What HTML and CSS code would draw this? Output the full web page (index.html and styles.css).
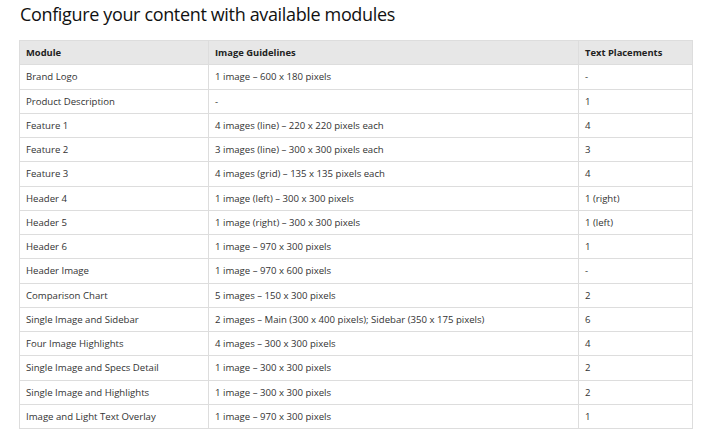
FILE: index.html
```html
<!DOCTYPE html>
<html lang="en">
<head>
<meta charset="utf-8">
<title>Modules</title>
<link rel="stylesheet" href="styles.css">
</head>
<body>
<main class="page">
  <h1 class="title">Configure your content with available modules</h1>
  <table class="modules">
    <colgroup>
      <col class="c1"><col class="c2"><col class="c3">
    </colgroup>
    <thead>
      <tr><th>Module</th><th>Image Guidelines</th><th>Text Placements</th></tr>
    </thead>
    <tbody>
      <tr><td>Brand Logo</td><td>1 image – 600 x 180 pixels</td><td>-</td></tr>
      <tr><td>Product Description</td><td>-</td><td>1</td></tr>
      <tr><td>Feature 1</td><td>4 images (line) – 220 x 220 pixels each</td><td>4</td></tr>
      <tr><td>Feature 2</td><td>3 images (line) – 300 x 300 pixels each</td><td>3</td></tr>
      <tr><td>Feature 3</td><td>4 images (grid) – 135 x 135 pixels each</td><td>4</td></tr>
      <tr><td>Header 4</td><td>1 image (left) – 300 x 300 pixels</td><td>1 (right)</td></tr>
      <tr><td>Header 5</td><td>1 image (right) – 300 x 300 pixels</td><td>1 (left)</td></tr>
      <tr><td>Header 6</td><td>1 image – 970 x 300 pixels</td><td>1</td></tr>
      <tr><td>Header Image</td><td>1 image – 970 x 600 pixels</td><td>-</td></tr>
      <tr><td>Comparison Chart</td><td>5 images – 150 x 300 pixels</td><td>2</td></tr>
      <tr><td>Single Image and Sidebar</td><td>2 images – Main (300 x 400 pixels); Sidebar (350 x 175 pixels)</td><td>6</td></tr>
      <tr><td>Four Image Highlights</td><td>4 images – 300 x 300 pixels</td><td>4</td></tr>
      <tr><td>Single Image and Specs Detail</td><td>1 image – 300 x 300 pixels</td><td>2</td></tr>
      <tr><td>Single Image and Highlights</td><td>1 image – 300 x 300 pixels</td><td>2</td></tr>
      <tr><td>Image and Light Text Overlay</td><td>1 image – 970 x 300 pixels</td><td>1</td></tr>
    </tbody>
  </table>
</main>
</body>
</html>
```
FILE: styles.css
```css
html, body {
  margin: 0;
  padding: 0;
  background: #ffffff;
}
.page {
  padding: 0 0 0 19px;
  font-family: "Open Sans", "Noto Sans", sans-serif;
}
.title {
  margin: 0;
  padding: 1px 0 0 1px;
  height: 40px;
  box-sizing: border-box;
  font-size: 18px;
  letter-spacing: -0.35px;
  font-weight: 400;
  color: #111111;
  line-height: 26px;
}
.modules {
  border-collapse: collapse;
  table-layout: fixed;
  width: 673px;
  font-size: 9.6px;
  color: #333333;
  border: 1px solid #dddddd;
}
.c1 { width: 189px; }
.c2 { width: 370px; }
.c3 { width: 114px; }
.modules tr {
  height: 24.25px;
}
.modules th,
.modules td {
  border: 1px solid #dddddd;
  padding: 0 6px;
  text-align: left;
  vertical-align: middle;
  white-space: nowrap;
}
.modules th {
  background: #e7e7e7;
  font-size: 9.4px;
  font-weight: 700;
  color: #222222;
}
```
